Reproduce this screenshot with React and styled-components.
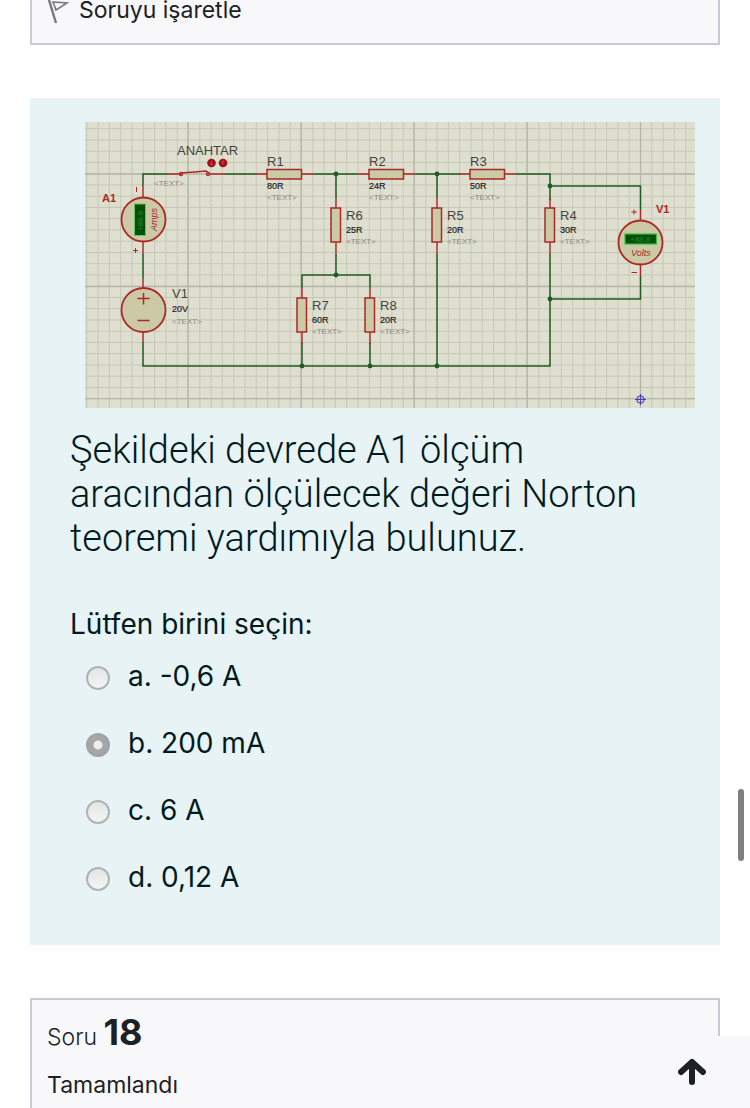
import React from "react";
import styled, { createGlobalStyle, css } from "styled-components";

const GlobalStyle = createGlobalStyle`
  *, *::before, *::after { box-sizing: border-box; }
  html, body { margin: 0; background: #fff; }
  html { scrollbar-width: none; }
  body {
    font-family: Inter, "Liberation Sans", sans-serif;
    color: #1d2125;
  }
`;

const Page = styled.main`
  display: flex;
  flex-direction: column;
  gap: 53px;
  min-height: 100vh;
  padding: 0 30px;
`;

const InfoBox = styled.section`
  flex: none;
  padding: 0 15px;
  background: #f8f8fb;
  border: 2px solid #cacad2;
  ${(p) =>
    p.$position === "previous"
      ? css`
          border-top: 0;
          padding-bottom: 19px;
        `
      : css`
          flex: 1 0 auto;
          border-bottom: 0;
          padding-top: 10px;
        `}
`;

const FlagLink = styled.a`
  display: flex;
  align-items: flex-start;
  gap: 9px;
  color: inherit;
  font-size: 23px;
  line-height: 20px;
  text-decoration: none;
`;

const QuestionHeading = styled.h3`
  margin: 0;
  font-size: 23px;
  font-weight: 300;
  line-height: 44px;
`;

const QuestionNumber = styled.span`
  font-size: 36px;
  font-weight: 700;
`;

const QuestionState = styled.p`
  margin: 10px 0 0;
  font-size: 23px;
  line-height: 32px;
`;

const QuestionCard = styled.section`
  flex: none;
  padding: 24px 25px 35px 40px;
  background: #e7f3f5;
  color: #001a1e;
`;

const CircuitFigure = styled.figure`
  margin: 0 0 20px 15px;
`;

const CircuitSvg = styled.svg`
  display: block;
  width: 100%;
  height: auto;
  font-family: "Liberation Sans", Arial, sans-serif;
`;

const QuestionText = styled.p`
  margin: 0 0 46px;
  font-family: Roboto, Inter, sans-serif;
  font-size: 38px;
  font-weight: 300;
  line-height: 44px;
`;

const AnswerGroup = styled.fieldset`
  margin: 0;
  padding: 0;
  border: 0;
`;

const Prompt = styled.legend`
  padding: 0;
  margin-bottom: 16px;
  font-size: 28px;
  line-height: 36px;
`;

const OptionList = styled.div`
  display: grid;
  gap: 31px;
  padding: 0 0 15px 16px;
`;

const Option = styled.label`
  display: flex;
  align-items: center;
  gap: 18px;
  font-size: 28px;
  line-height: 36px;
`;

const Radio = styled.input`
  appearance: none;
  flex: none;
  width: 24px;
  height: 24px;
  margin: 3px 0 0;
  border: 2px solid #b0b3b4;
  border-radius: 50%;
  background: linear-gradient(#e2e5e6, #f3f5f5);
  &:checked {
    border-color: #a0a2a3;
    background: radial-gradient(circle, #eceeee 4px, #a4a6a7 5px);
  }
`;

const ScrollThumb = styled.div`
  position: fixed;
  top: 789px;
  right: 6px;
  width: 6px;
  height: 72px;
  border-radius: 3px;
  background: #7f7f7f;
`;

const TopButton = styled.button`
  position: fixed;
  right: 0;
  bottom: 0;
  display: flex;
  align-items: center;
  justify-content: center;
  width: 116px;
  height: 72px;
  padding: 0;
  border: 0;
  background: #f8f8fb;
  color: #1d2125;
`;

const RED = "#a92a26";
const GREEN = "#215c22";
const FILL = "#cbc9a6";

const minorX = Array.from({ length: 54 }, (_, i) => 555.5 - 11.3 * (i - 4));
const minorY = Array.from({ length: 26 }, (_, i) => 276.7 - 11.25 * i);

const horizontalResistors = [
  { name: "R1", value: "80R", x: 182 },
  { name: "R2", value: "24R", x: 284 },
  { name: "R3", value: "50R", x: 385 },
];

const verticalResistors = [
  { name: "R6", value: "25R", x: 251, y: 86 },
  { name: "R5", value: "20R", x: 352, y: 86 },
  { name: "R4", value: "30R", x: 465, y: 86 },
  { name: "R7", value: "60R", x: 217, y: 176 },
  { name: "R8", value: "20R", x: 285, y: 176 },
];

const junctions = [
  [251, 52], [352, 52], [465, 64], [465, 177], [251, 153],
  [217, 244], [285, 244], [352, 244],
];

function PartText({ x, y, name, value, drop = 13, placeholderGap = 11 }) {
  return (
    <g>
      <text x={x} y={y} fontSize="13" fill="#454540">{name}</text>
      <text x={x} y={y + drop} fontSize="9" fill="#22221f" stroke="#22221f" strokeWidth="0.2">{value}</text>
      <text x={x} y={y + drop + placeholderGap} fontSize="8" fill="#8a8a82">{"<TEXT>"}</text>
    </g>
  );
}

function Circuit() {
  return (
    <CircuitSvg viewBox="0 0 610 286" role="img" aria-label="Devre şeması">
      <rect width="610" height="286" fill="#dfdfd0" />
      <g stroke="#c7c7b8" strokeWidth="1">
        {minorX.map((x) => <line key={x} x1={x} x2={x} y1="0" y2="286" />)}
        {minorY.map((y) => <line key={y} x1="0" x2="610" y1={y} y2={y} />)}
      </g>
      <g stroke="#b6b6a8" strokeWidth="1.3">
        {[103, 216, 329, 442, 555.5].map((x) => <line key={x} x1={x} x2={x} y1="0" y2="286" />)}
        {[52, 164.5, 276.7].map((y) => <line key={y} x1="0" x2="610" y1={y} y2={y} />)}
      </g>

      <g fill="none" stroke={GREEN} strokeWidth="1.5">
        <path d="M58 64V52H83M140 52H171M228 52H273M330 52H375M431 52H465V78" />
        <path d="M251 52V76M251 132V153M217 166V153H285V166M352 52V76M352 132V244" />
        <path d="M465 64H555.5V88M555.5 154V177H465M465 132V244H58V220" />
        <path d="M217 220V244M285 220V244M58 132V156" />
      </g>
      <g fill={GREEN}>
        {junctions.map(([x, y]) => <circle key={`${x}-${y}`} cx={x} cy={y} r="2.4" />)}
      </g>

      <g fill="none" stroke={RED} strokeWidth="1.4">
        <path d="M83 52H96M124 52H140M58 64V76M58 119V132M58 156V167M58 210V220M555.5 88V99M555.5 142V154" />
        <path d="M96 51L109 50L121 49L124 51" />
        <circle cx="96" cy="52" r="1.5" />
        <circle cx="123" cy="52" r="1.5" />
      </g>
      <g fill="#a11218">
        <circle cx="126.5" cy="41" r="4.3" />
        <circle cx="138" cy="41" r="4.3" />
      </g>
      <path d="M126.5 39V43M125 42L126.5 43L128 42M138 43V39M136.5 40L138 39L139.5 40" fill="none" stroke="#c4534c" strokeWidth="0.8" />
      <text x="92" y="33" fontSize="13" fill="#454540">ANAHTAR</text>
      <text x="69" y="64" fontSize="8" fill="#8a8a82">{"<TEXT>"}</text>

      {horizontalResistors.map(({ name, value, x }) => (
        <g key={name}>
          <path d={`M${x - 11} 52H${x}M${x + 35} 52H${x + 46}`} stroke={RED} strokeWidth="1.4" />
          <rect x={x} y="47.5" width="34.5" height="9.5" fill={FILL} stroke={RED} strokeWidth="1.5" />
          <PartText x={x} y={44} name={name} value={value} drop={23} />
        </g>
      ))}
      {verticalResistors.map(({ name, value, x, y }) => (
        <g key={name}>
          <path d={`M${x} ${y - 10}V${y}M${x} ${y + 34}V${y + 46}`} stroke={RED} strokeWidth="1.4" />
          <rect x={x - 5} y={y} width="9.5" height="34" fill={FILL} stroke={RED} strokeWidth="1.5" />
          <PartText x={x + 10} y={y + 12} name={name} value={value} />
        </g>
      ))}

      <g fill={FILL} stroke={RED} strokeWidth="1.8">
        <circle cx="58.5" cy="97.5" r="22" />
        <circle cx="58.5" cy="188" r="22" />
        <circle cx="555.5" cy="120.5" r="22" />
      </g>
      <path d="M52.5 176.5H64.5M58.5 171V182.5M52.5 198.5H64.5" stroke={RED} strokeWidth="1.5" />
      <PartText x={87} y={176} name="V1" value="20V" drop={14} placeholderGap={12} />

      <rect x="49.5" y="82" width="11" height="31.5" fill="#064f0b" stroke="#62c45c" strokeWidth="1" />
      <text transform="translate(58 109) rotate(-90)" fontSize="8" fill="#23852a">+88.8</text>
      <text transform="translate(72 109) rotate(-90)" fontSize="9" fontStyle="italic" fill={RED}>Amps</text>
      <rect x="540" y="112" width="31.5" height="10" fill="#064f0b" stroke="#36bf3b" strokeWidth="1.2" />
      <text x="545" y="120" fontSize="8" fill="#23852a">+88.8</text>
      <text x="546" y="134" fontSize="9" fontStyle="italic" fill={RED}>Volts</text>
      <g fill={RED} fontSize="11" fontWeight="700">
        <text x="17" y="80">A1</text>
        <text x="571" y="91">V1</text>
      </g>
      <path d="M51.5 65V70M48 128.5H53M50.5 126V131M546.5 90H552M549 87.5V92.5M546.5 150.5H552" stroke={RED} strokeWidth="1" />

      <g fill="none" stroke="#4542b5" strokeWidth="1.1">
        <circle cx="555.5" cy="277.5" r="3.5" />
        <path d="M550 277.5H561M555.5 272V283" />
      </g>
    </CircuitSvg>
  );
}

const options = [
  { id: "a", text: "a. -0,6 A" },
  { id: "b", text: "b. 200 mA" },
  { id: "c", text: "c. 6 A" },
  { id: "d", text: "d. 0,12 A" },
];

export default function App() {
  return (
    <>
      <GlobalStyle />
      <Page>
        <InfoBox $position="previous">
          <FlagLink href="#flag">
            <svg width="23" height="24" viewBox="0 0 23 24" fill="none" stroke="#77787a" aria-hidden="true">
              <path d="M2 0L9 23" strokeWidth="2.4" />
              <path d="M6 2L20 3L9 10Z" strokeWidth="1.6" />
            </svg>
            Soruyu işaretle
          </FlagLink>
        </InfoBox>

        <QuestionCard>
          <CircuitFigure><Circuit /></CircuitFigure>
          <QuestionText>
            Şekildeki devrede A1 ölçüm aracından ölçülecek değeri Norton teoremi yardımıyla bulunuz.
          </QuestionText>
          <AnswerGroup>
            <Prompt>Lütfen birini seçin:</Prompt>
            <OptionList>
              {options.map(({ id, text }) => (
                <Option key={id}>
                  <Radio type="radio" name="answer" value={id} defaultChecked={id === "b"} />
                  {text}
                </Option>
              ))}
            </OptionList>
          </AnswerGroup>
        </QuestionCard>

        <InfoBox $position="next">
          <QuestionHeading>
            Soru <QuestionNumber>18</QuestionNumber>
          </QuestionHeading>
          <QuestionState>Tamamlandı</QuestionState>
        </InfoBox>
      </Page>
      <ScrollThumb />
      <TopButton type="button" aria-label="Sayfanın başına dön">
        <svg width="28" height="28" viewBox="0 0 28 28" fill="none" stroke="currentColor" strokeWidth="6" strokeLinecap="round" strokeLinejoin="round" aria-hidden="true">
          <path d="M14 24V4M3 14L14 4L25 14" />
        </svg>
      </TopButton>
    </>
  );
}
